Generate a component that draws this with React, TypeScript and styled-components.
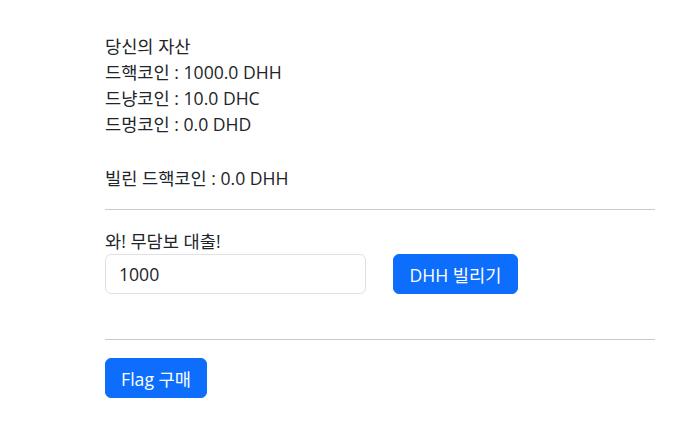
import React from "react";
import styled, { createGlobalStyle } from "styled-components";

const Global = createGlobalStyle`
  html, body { margin: 0; padding: 0; background: #fff; }
  body {
    font-family: "Open Sans", "Noto Sans", "Noto Sans CJK KR", sans-serif;
    font-size: 17.6px;
    color: #212529;
  }
  * { box-sizing: border-box; }
`;

const Page = styled.div`
  padding: 33px 0 0 105px;
  width: 655px;
  display: flex;
  flex-direction: column;
`;

const Line = styled.div<{ $gapTop?: number }>`
  line-height: 26px;
  height: 26px;
  margin-top: ${(p) => p.$gapTop ?? 0}px;
  white-space: nowrap;
`;

const Rule = styled.hr<{ $top: number; $bottom: number }>`
  border: 0;
  border-top: 1px solid #c9cacb;
  margin: ${(p) => p.$top}px 0 ${(p) => p.$bottom}px;
  width: 550px;
  height: 0;
`;

const Row = styled.div`
  display: flex;
  align-items: center;
  gap: 27px;
`;

const Input = styled.input`
  width: 261px;
  height: 40px;
  padding: 0 13px;
  border: 1px solid #dee2e6;
  border-radius: 6px;
  font-family: inherit;
  font-size: 17.6px;
  color: #212529;
  outline: none;
`;

const Button = styled.button<{ $w: number }>`
  width: ${(p) => p.$w}px;
  height: 40px;
  background: #0d6efd;
  color: #fff;
  border: 1px solid #0d6efd;
  border-radius: 6px;
  font-family: inherit;
  font-size: 17.6px;
  padding: 0;
  cursor: pointer;
`;

export default function App() {
  return (
    <>
      <Global />
      <Page>
        <Line>당신의 자산</Line>
        <Line>드핵코인 : 1000.0 DHH</Line>
        <Line>드냥코인 : 10.0 DHC</Line>
        <Line>드멍코인 : 0.0 DHD</Line>
        <Line $gapTop={28}>빌린 드핵코인 : 0.0 DHH</Line>
        <Rule $top={18} $bottom={18} />
        <Line>와! 무담보 대출!</Line>
        <Row>
          <Input defaultValue="1000" />
          <Button $w={125}>DHH 빌리기</Button>
        </Row>
        <Rule $top={45} $bottom={18} />
        <div>
          <Button $w={102}>Flag 구매</Button>
        </div>
      </Page>
    </>
  );
}
